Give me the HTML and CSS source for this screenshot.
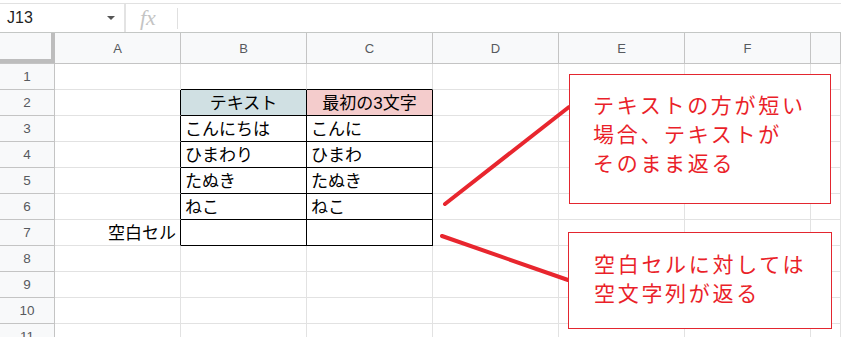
FILE: index.html
```html
<!DOCTYPE html>
<html>
<head>
  <meta charset="UTF-8">
  <link rel="stylesheet" href="styles.css">
</head>
<body>

  <!-- 数式バー -->
  <div class="toolbar">
    <div class="namebox">
      <span class="ref">J13</span>
      <span class="caret"></span>
    </div>
    <div class="fx">fx</div>
    <div class="formula"></div>
  </div>

  <!-- シート -->
  <div class="sheet">
    <div class="row head">
      <div class="corner"></div>
      <div class="col">A</div>
      <div class="col">B</div>
      <div class="col">C</div>
      <div class="col">D</div>
      <div class="col">E</div>
      <div class="col">F</div>
      <div class="col"></div>
    </div>

    <div class="row">
      <div class="num">1</div>
      <div class="cell"></div>
      <div class="cell above"></div>
      <div class="cell above"></div>
      <div class="cell"></div><div class="cell"></div><div class="cell"></div><div class="cell"></div>
    </div>

    <div class="row">
      <div class="num">2</div>
      <div class="cell left-of"></div>
      <div class="cell box title-a">テキスト</div>
      <div class="cell box title-b">最初の3文字</div>
      <div class="cell"></div><div class="cell"></div><div class="cell"></div><div class="cell"></div>
    </div>

    <div class="row">
      <div class="num">3</div>
      <div class="cell left-of"></div>
      <div class="cell box">こんにちは</div>
      <div class="cell box">こんに</div>
      <div class="cell"></div><div class="cell"></div><div class="cell"></div><div class="cell"></div>
    </div>

    <div class="row">
      <div class="num">4</div>
      <div class="cell left-of"></div>
      <div class="cell box">ひまわり</div>
      <div class="cell box">ひまわ</div>
      <div class="cell"></div><div class="cell"></div><div class="cell"></div><div class="cell"></div>
    </div>

    <div class="row">
      <div class="num">5</div>
      <div class="cell left-of"></div>
      <div class="cell box">たぬき</div>
      <div class="cell box">たぬき</div>
      <div class="cell"></div><div class="cell"></div><div class="cell"></div><div class="cell"></div>
    </div>

    <div class="row">
      <div class="num">6</div>
      <div class="cell left-of"></div>
      <div class="cell box">ねこ</div>
      <div class="cell box">ねこ</div>
      <div class="cell"></div><div class="cell"></div><div class="cell"></div><div class="cell"></div>
    </div>

    <div class="row">
      <div class="num">7</div>
      <div class="cell left-of right">空白セル</div>
      <div class="cell box"></div>
      <div class="cell box"></div>
      <div class="cell"></div><div class="cell"></div><div class="cell"></div><div class="cell"></div>
    </div>

    <div class="row">
      <div class="num">8</div>
      <div class="cell"></div><div class="cell"></div><div class="cell"></div>
      <div class="cell"></div><div class="cell"></div><div class="cell"></div><div class="cell"></div>
    </div>

    <div class="row">
      <div class="num">9</div>
      <div class="cell"></div><div class="cell"></div><div class="cell"></div>
      <div class="cell"></div><div class="cell"></div><div class="cell"></div><div class="cell"></div>
    </div>

    <div class="row">
      <div class="num">10</div>
      <div class="cell"></div><div class="cell"></div><div class="cell"></div>
      <div class="cell"></div><div class="cell"></div><div class="cell"></div><div class="cell"></div>
    </div>

    <div class="row">
      <div class="num">11</div>
      <div class="cell"></div><div class="cell"></div><div class="cell"></div>
      <div class="cell"></div><div class="cell"></div><div class="cell"></div><div class="cell"></div>
    </div>
  </div>

  <!-- 図形（吹き出し） -->
  <svg class="arrows" width="841" height="337">
    <line x1="445" y1="204" x2="569" y2="107" />
    <line x1="442" y1="236" x2="568" y2="280" />
  </svg>

  <div class="note note-top">テキストの方が短い<br>場合、テキストが<br>そのまま返る</div>
  <div class="note note-bottom">空白セルに対しては<br>空文字列が返る</div>

</body>
</html>
```

FILE: styles.css
```css
body {
  margin: 0;
  width: 841px;
  height: 337px;
  overflow: hidden;
  position: relative;
  font-family: "Liberation Sans", "Noto Sans CJK JP", sans-serif;
  background: #fff;
}

.toolbar {
  display: flex;
  align-items: center;
  height: 28px;
  margin-top: 3px;
  border-top: 1px solid #e1e1e1;
  border-bottom: 1px solid #c4c7c5;
}

.namebox {
  display: flex;
  align-items: center;
  width: 126px;
  height: 28px;
  box-sizing: border-box;
  padding-left: 7px;
  border-right: 2px solid #e3e3e3;
}
.ref {
  font-size: 16px;
  color: #1f1f1f;
  flex: 1;
}
.caret {
  width: 0;
  height: 0;
  margin-right: 9px;
  border-left: 4px solid transparent;
  border-right: 4px solid transparent;
  border-top: 4px solid #555;
}

.fx {
  width: 52px;
  height: 21px;
  box-sizing: border-box;
  padding-left: 14px;
  border-right: 1px solid #e0e0e0;
  font-family: "Liberation Serif", serif;
  font-style: italic;
  font-size: 22px;
  line-height: 19px;
  color: #c4c4c4;
}

.formula {
  flex: 1;
}

.row {
  display: grid;
  grid-template-columns: 55px repeat(6, 126px) 1fr;
  height: 26px;
}
.row.head {
  height: 31px;
}

.row > div {
  box-sizing: border-box;
  border-right: 1px solid #e2e2e2;
  border-bottom: 1px solid #e2e2e2;
}

.row.head > div,
.row > .num {
  background: #f8f9fa;
  border-color: #c4c4c4;
  color: #575a5e;
  display: flex;
  align-items: center;
  justify-content: center;
}
.col {
  font-size: 13px;
  padding-top: 1px;
}
.num {
  font-size: 13.5px;
}
.row.head > .corner {
  border-right-color: #bdbdbd;
  box-shadow: inset -3px -4px 0 #bdbdbd;
}

.cell {
  font-size: 17px;
  line-height: 25px;
  padding: 1px 4px 0;
  white-space: nowrap;
  overflow: hidden;
  color: #000;
}
.cell.right {
  text-align: right;
}

/* 表の罫線 */
.row > .above {
  border-bottom-color: #000;
}
.row > .left-of {
  border-right-color: #000;
}
.row > .box {
  border-right-color: #000;
  border-bottom-color: #000;
}
.title-a {
  background: #d0e0e3;
  text-align: center;
}
.title-b {
  background: #f4cccc;
  text-align: center;
}

/* 吹き出し */
.arrows {
  position: absolute;
  left: 0;
  top: 0;
}
.arrows line {
  stroke: #e8262e;
  stroke-width: 4;
  stroke-linecap: round;
}

.note {
  position: absolute;
  box-sizing: border-box;
  background: #fff;
  border: 1px solid #e3262f;
  color: #ea1f2a;
  font-size: 21px;
  letter-spacing: 2.7px;
  white-space: nowrap;
}
.note-top {
  left: 569px;
  top: 74px;
  width: 262px;
  height: 130px;
  padding: 16px 0 0 23px;
  line-height: 29px;
}
.note-bottom {
  left: 568px;
  top: 232px;
  width: 264px;
  height: 97px;
  padding: 18px 0 0 25px;
  line-height: 28.5px;
}
```
